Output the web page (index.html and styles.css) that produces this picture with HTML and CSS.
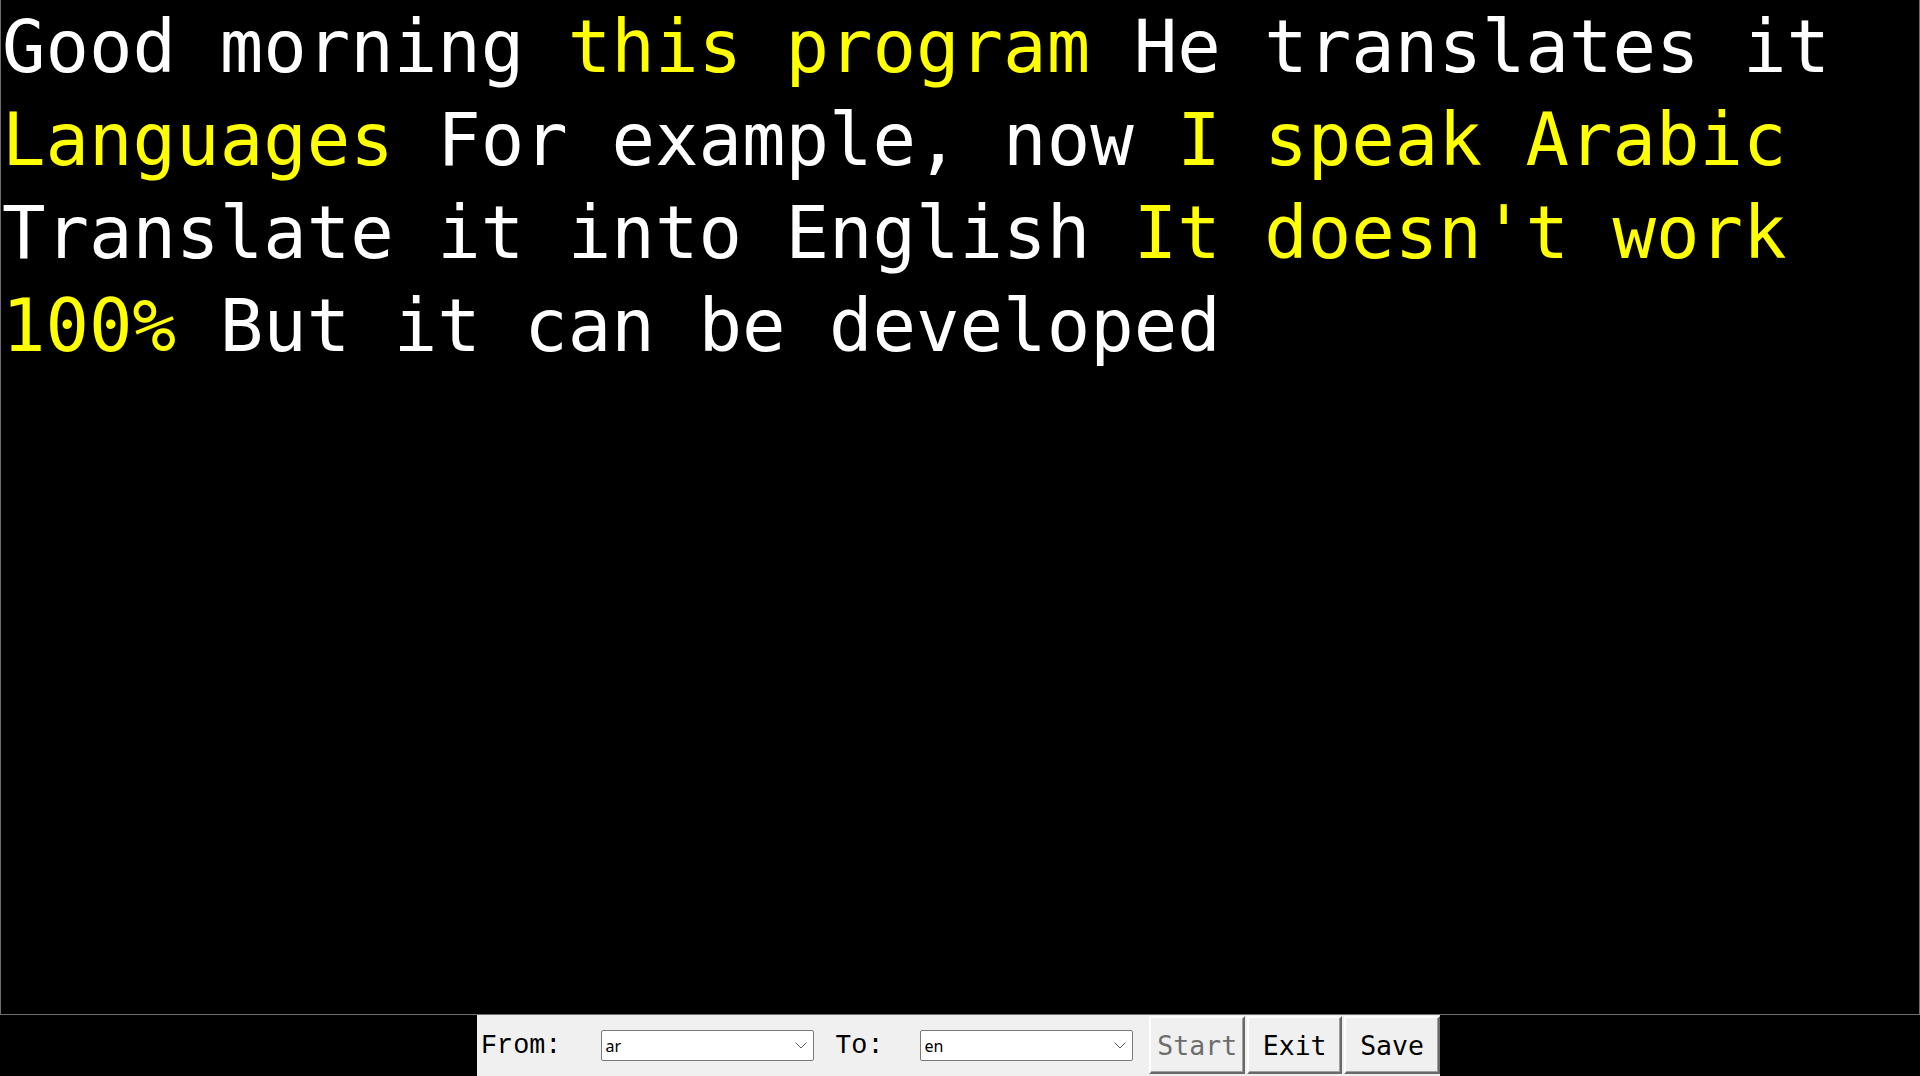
FILE: index.html
```html
<!DOCTYPE html>
<html lang="en">
<head>
<meta charset="utf-8">
<title>Translator</title>
<link rel="stylesheet" href="styles.css">
</head>
<body>
<div class="app">
  <div class="output">
    <div class="line"><span class="w">Good morning </span><span class="y">this program</span><span class="w"> He translates it</span></div>
    <div class="line"><span class="y">Languages</span><span class="w"> For example, now </span><span class="y">I speak Arabic</span></div>
    <div class="line"><span class="w">Translate it into English </span><span class="y">It doesn't work</span></div>
    <div class="line"><span class="y">100%</span><span class="w"> But it can be developed</span></div>
  </div>
  <div class="bar">
    <div class="toolbar">
      <span class="label label-from">From:</span>
      <div class="combo combo-from">
        <span class="combo-text">ar</span>
        <svg class="chev" width="12" height="7" viewBox="0 0 12 7"><polyline points="0.5,0.5 6,6 11.5,0.5" fill="none" stroke="#606060" stroke-width="1"/></svg>
      </div>
      <span class="label label-to">To:</span>
      <div class="combo combo-to">
        <span class="combo-text">en</span>
        <svg class="chev" width="12" height="7" viewBox="0 0 12 7"><polyline points="0.5,0.5 6,6 11.5,0.5" fill="none" stroke="#606060" stroke-width="1"/></svg>
      </div>
      <button class="btn btn-start" disabled>Start</button>
      <button class="btn btn-exit">Exit</button>
      <button class="btn btn-save">Save</button>
    </div>
  </div>
</div>
</body>
</html>
```
FILE: styles.css
```css
html, body {
  margin: 0;
  padding: 0;
  background: #000;
  width: 1920px;
  height: 1076px;
  overflow: hidden;
}

.app {
  display: flex;
  flex-direction: column;
  height: 1076px;
}

.output {
  box-sizing: border-box;
  height: 1015px;
  flex: none;
  overflow: hidden;
  border: 1px solid #6e6e6e;
  border-top: none;
  background: #000;
  padding: 1px 0 0 1px;
  font-family: "DejaVu Sans Mono", "Liberation Mono", monospace;
  font-size: 72.3px;
  line-height: 93px;
}

.line {
  white-space: pre;
  height: 93px;
}

.w { color: #ffffff; }
.y { color: #ffff00; }

.bar {
  flex: 1;
  display: flex;
  justify-content: center;
}

.toolbar {
  box-sizing: border-box;
  width: 963px;
  margin-left: -3px;
  height: 61px;
  background: #f0f0f0;
  display: flex;
  align-items: center;
  padding-left: 4px;
}

.label {
  font-family: "Liberation Mono", "DejaVu Sans Mono", monospace;
  font-size: 26.8px;
  color: #000;
  white-space: pre;
}

.label-from { margin-right: 40px; }
.label-to { margin-left: 21px; margin-right: 37px; }

.combo {
  box-sizing: border-box;
  width: 213px;
  height: 31px;
  background: #fff;
  border: 1px solid #7a7a7a;
  border-radius: 2px;
  display: flex;
  align-items: center;
  justify-content: space-between;
  padding: 0 6px 0 3px;
}

.combo-text {
  font-family: "Noto Sans", "Open Sans", sans-serif;
  font-size: 16px;
  color: #000;
}

.chev {
  display: block;
}

.btn {
  box-sizing: border-box;
  height: 58px;
  margin-top: 1px;
  margin-bottom: 2px;
  align-self: flex-start;
  background: #f0f0f0;
  border: 2px solid;
  border-color: #ffffff #696969 #696969 #ffffff;
  box-shadow: inset -1px -1px 0 #a0a0a0;
  font-family: "DejaVu Sans Mono", "Liberation Mono", monospace;
  font-size: 26.5px;
  color: #000;
  padding: 0;
  margin-left: 2px;
}

.btn-start {
  width: 96px;
  margin-left: 16px;
  color: #6d6d6d;
}

.btn-exit { width: 95px; }
.btn-save { width: 96px; }
```
